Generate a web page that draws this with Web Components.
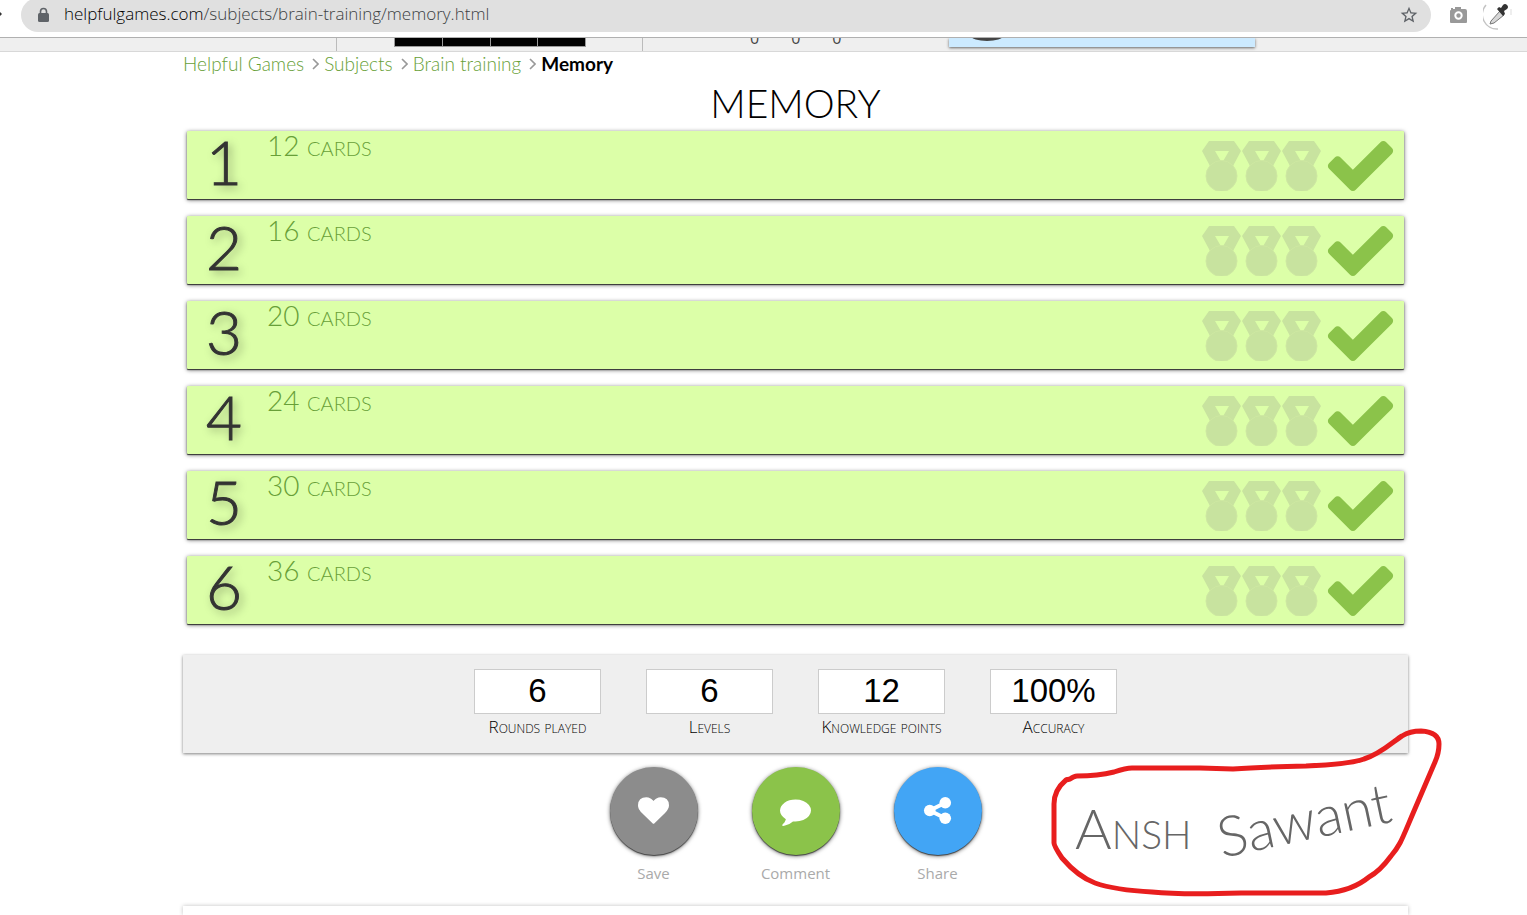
<!DOCTYPE html>
<html lang="en">
<head>
<meta charset="utf-8">
<title>Memory - Helpful Games</title>
<style>
html, body { margin: 0; height: 100%; }
body { background: #fff; color: #000; font-family: "Lato", "Open Sans", sans-serif; }
</style>
</head>
<body>
<memory-page></memory-page>

<script>
function define(name, html, setup) {
  const template = document.createElement('template');
  template.innerHTML = html;
  customElements.define(name, class extends HTMLElement {
    connectedCallback() {
      if (this.shadowRoot) return;
      this.attachShadow({ mode: 'open' }).append(template.content.cloneNode(true));
      if (setup) setup(this, this.shadowRoot);
    }
  });
}

define('browser-bar', `
<style>
:host { display: flex; align-items: flex-end; box-sizing: border-box; height: 37px; padding-bottom: 5px; overflow: hidden; background: #fff; }
.edge { width: 21px; height: 34px; flex: none; }
.address { flex: 1; display: flex; align-items: center; box-sizing: border-box; height: 34px; padding: 0 12px 0 16px; border-radius: 17px; background: #e0e0e0; font: 300 17px/24px "Open Sans", sans-serif; color: #3c4043; }
.url { flex: 1; margin-left: 14px; padding-bottom: 2px; white-space: nowrap; }
b { font-weight: 300; color: #000; }
button { display: block; flex: none; border: 0; padding: 0; background: none; }
svg { display: block; }
.tools { display: flex; align-items: center; height: 34px; flex: none; width: 96px; }
.camera { margin-left: 18px; }
.picker { margin-left: 16px; }
</style>
<svg class="edge" viewBox="0 0 21 34" aria-hidden="true"><path d="M0 14 2 16 0 18z" fill="#333"/></svg>
<div class="address">
  <svg width="13" height="16" viewBox="0 0 13 16" aria-hidden="true"><path d="M3.500 7V4.500a3 3 0 0 1 6 0V7" fill="none" stroke="#5f6368" stroke-width="1.600"/><rect x="1" y="6" width="11" height="9" rx="1.500" fill="#5f6368"/></svg>
  <span class="url"><b>helpfulgames.com</b>/subjects/brain-training/memory.html</span>
  <button aria-label="Bookmark"><svg width="20" height="20" viewBox="0 0 24 24"><path fill="#5f6368" d="M22 9.240l-7.190-.620L12 2 9.190 8.630 2 9.240l5.460 4.730L5.820 21 12 17.270 18.180 21l-1.630-7.030L22 9.240zM12 15.400l-3.760 2.270 1-4.280-3.320-2.880 4.380-.380L12 6.100l1.710 4.040 4.380.380-3.320 2.880 1 4.280L12 15.400z"/></svg></button>
</div>
<div class="tools">
  <button class="camera" aria-label="Screenshot"><svg width="18" height="18" viewBox="0 0 18 18"><path fill="#999" d="M2 2h2v1h2V1h6v2h4q2 0 2 2v11q0 1-1 1H2q-1 0-1-1V5q0-1 1-1z"/><circle cx="9.500" cy="9.500" r="3.200" fill="none" stroke="#fff" stroke-width="2"/></svg></button>
  <button class="picker" aria-label="Colour picker"><svg width="32" height="32" viewBox="0 0 32 32"><path d="M3 6A14.500 14.500 0 0 0 15 30" fill="none" stroke="#c4c4c4" stroke-width="1.500"/><path d="M28 10v6" fill="none" stroke="#ddd"/><path d="M8 22 17 12l4 4L11 24l-4 1z" fill="#d7d7d7" stroke="#777"/><path d="m14 10 2-2 2 1 2-3q2-2 4 0t0 4l-3 2 1 3-2 2z" fill="#333"/></svg></button>
</div>`);

define('game-strip', `
<style>
:host { display: flex; align-items: stretch; box-sizing: border-box; height: 15px; overflow: hidden; border-top: 1px solid #b0b0b0; border-bottom: 1px solid #d8d8d8; background: #efefef; }
.lead { flex: none; width: 336px; }
.board { flex: none; box-sizing: border-box; width: 307px; padding-left: 57px; border: solid #bbb; border-width: 0 1px; }
.cells { display: grid; grid-template-columns: repeat(4, 1fr); gap: 1px; box-sizing: border-box; width: 192px; height: 9px; border: solid #999; border-width: 0 1px 1px; background: #999; }
.cells i { background: #000; }
.score { display: flex; align-items: flex-end; flex: none; gap: 32px; box-sizing: border-box; width: 306px; height: 10px; padding-left: 107px; font: 16px/20px "Open Sans", sans-serif; color: #444; }
.card { flex: none; box-sizing: border-box; width: 306px; height: 9px; padding-left: 20px; background: #cceaff; box-shadow: 0 1px 3px #666; }
.card svg { display: block; }
</style>
<div class="lead"></div>
<div class="board"><div class="cells"><i></i><i></i><i></i><i></i></div></div>
<div class="score"><span>0</span><span>0</span><span>0</span></div>
<div class="card"><svg width="36" height="4" viewBox="0 0 36 4" aria-hidden="true"><ellipse cx="18" cy="-2" rx="16" ry="5" fill="#444"/></svg></div>`);

define('bread-crumbs', `
<style>
:host { display: block; }
ol { display: flex; margin: 0; padding: 0; list-style: none; font-size: 19px; line-height: 24px; white-space: nowrap; }
li { display: flex; align-items: center; }
a { color: #689f38; text-decoration: none; font-weight: 300; }
strong { font-weight: 700; }
svg { margin: 0 5px 0 8px; }
</style>
<nav aria-label="Breadcrumb"><ol></ol></nav>`, (host, root) => {
  const names = host.getAttribute('path').split('/');
  const chevron = '<svg width="7" height="12" viewBox="0 0 7 12" aria-hidden="true"><path d="m1 1 5 5-5 5" fill="none" stroke="#999" stroke-width="1.600"/></svg>';
  root.querySelector('ol').innerHTML = names.map((n, i) => i < names.length - 1
    ? `<li><a href="#">${n}</a>${chevron}</li>` : `<li><strong>${n}</strong></li>`).join('');
});

define('award-medal', `
<style>:host { display: block; width: 40px; height: 50px; } svg { display: block; }</style>
<svg width="40" height="50" viewBox="0 0 40 50" aria-hidden="true">
<path fill="#c8e39f" fill-rule="evenodd" d="M7 0H32L39 10 31 25H8L0 10zM13 10 20 22 27 10z"/>
<circle cx="19.500" cy="35" r="15.500" fill="#c8e39f" stroke="#cee8a2"/></svg>`);

define('level-row', `
<style>
:host { display: block; }
a { display: flex; height: 68px; box-sizing: border-box; background: #dcffa8; color: #689f38; text-decoration: none; box-shadow: 0 1px 1px #333, 0 1px 4px rgba(0,0,0,.6); border-radius: 1px; }
.number { flex: none; width: 74px; font-size: 62px; line-height: 60px; text-align: center; font-weight: 300; color: #333; text-shadow: 3px 3px 10px rgba(0,0,0,.4); -webkit-text-stroke: 1px #333; }
.name { flex: 1; margin-left: 6px; font-size: 28px; line-height: 28px; font-weight: 300; font-variant: small-caps; }
.awards { display: flex; padding: 10px 10px 0 0; }
.check { display: block; margin-left: 5px; }
</style>
<a href="#"><span class="number"></span><span class="name"><slot></slot></span>
<span class="awards"><award-medal></award-medal><award-medal></award-medal><award-medal></award-medal>
<svg class="check" width="67" height="50" viewBox="121 334 1550 1188" preserveAspectRatio="xMidYMid meet" role="img" aria-label="Completed"><path fill="#8bc34a" d="M1671 566q0 40-28 68l-724 724-136 136q-28 28-68 28t-68-28l-136-136-362-362q-28-28-28-68t28-68l136-136q28-28 68-28t68 28l294 295 656-657q28-28 68-28t68 28l136 136q28 28 28 68z"/></svg></span></a>`, (host, root) => {
  root.querySelector('.number').textContent = host.getAttribute('number');
});

define('stat-box', `
<style>
:host { display: block; width: 127px; }
dl { display: flex; flex-direction: column-reverse; margin: 0; text-align: center; }
dd { margin: 0; box-sizing: border-box; height: 45px; border: 1px solid #ccc; background: #fff; font: 33px/42px "Liberation Sans", Arial, sans-serif; }
dt { font: 300 17px/26px "Open Sans", sans-serif; font-variant: small-caps; white-space: nowrap; }
</style>
<dl><dt><slot></slot></dt><dd></dd></dl>`, (host, root) => {
  root.querySelector('dd').textContent = host.getAttribute('value');
});

define('stats-panel', `
<style>
:host { display: flex; justify-content: center; gap: 45px; box-sizing: border-box; height: 98px; padding-top: 14px; background: #efefef; box-shadow: 0 1px 3px rgba(0,0,0,.5); }
</style><slot></slot>`);

const ICONS = {
  heart: '<path d="M896 1664q-26 0-44-18l-624-602q-10-8-27.500-26t-55.500-65.500-68-97.500-53.500-121-23.500-138q0-220 127-344t351-124q62 0 126.500 21.500t120 58 95.500 68.500 76 68q36-36 76-68t95.500-68.500 120-58 126.500-21.500q224 0 351 124t127 344q0 221-229 450l-623 600q-18 18-44 18z"/>',
  comment: '<path d="M1792 896q0 174-120 321.500t-326 233-450 85.500q-70 0-145-8-198 175-460 242-49 14-114 22-17 2-30.500-9t-17.500-29v-1q-3-4-.5-12t2-10 4.500-9.500l6-9 7-8.500 8-9q7-8 31-34.500t34.500-38 31-39.500 32.500-51 27-59 26-76q-157-89-247.500-220t-90.500-281q0-130 71-248.500t191-204.500 286-136.500 348-50.500q244 0 450 85.500t326 233 120 321.500z"/>',
  share: '<circle cx="448" cy="896" r="336"/><circle cx="1344" cy="448" r="336"/><circle cx="1344" cy="1344" r="336"/><path d="M1344 448 448 896l896 448" fill="none" stroke="#fff" stroke-width="230"/>'
};

define('round-action', `
<style>
:host { display: block; width: 88px; }
button { display: flex; flex-direction: column; align-items: center; gap: 7px; width: 88px; padding: 0; border: 0; background: none; font: 15px/22px "Open Sans", "Noto Sans", sans-serif; color: #aaa; }
.disc { display: flex; align-items: center; justify-content: center; box-sizing: border-box; width: 88px; height: 88px; padding-bottom: 2px; border-radius: 50%; background: var(--disc); box-shadow: 0 1px 1px #444, 0 1px 4px rgba(0,0,0,.6); }
</style>
<button><span class="disc"></span><slot></slot></button>`, (host, root) => {
  root.querySelector('.disc').innerHTML = `<svg width="31" height="31" viewBox="0 0 1792 1792" fill="#fff" aria-hidden="true">${ICONS[host.getAttribute('icon')]}</svg>`;
});

define('signed-note', `
<style>
:host { display: block; width: 394px; height: 170px; pointer-events: none; }
svg { display: block; overflow: visible; }
text { font: 300 56px "Lato", sans-serif; fill: #666; }
.first { font-variant: small-caps; }
</style>
<svg width="394" height="170" viewBox="0 0 394 170">
<path d="M18 52L22 51Q26 48 29 48Q50 48 66 44Q78 40 84 40L152 40 185 41Q212 39 258 38Q302 36 316 31C333 26 347 12 354 8Q362 3 373 3Q391 4 391 16Q391 25 387 34L366 83C354 111 353 116 343 128Q332 143 321 149Q304 163 278 165L193 165Q133 167 104 164Q67 162 47 155C31 149 20 137 14 130Q6 118 6 115L6 76Q6 62 18 52" fill="none" stroke="#e81e1e" stroke-width="5" stroke-linecap="round" stroke-linejoin="round"/>
<text class="first" x="27" y="121">Ansh</text>
<text x="174" y="130" transform="rotate(-12 174 130)">Sawant</text>
</svg>`);

define('memory-page', `
<style>
:host { display: flex; flex-direction: column; min-height: 100vh; }
main { flex: 1; display: flex; flex-direction: column; padding: 0 119px 0 183px; }
h1 { margin: 0; height: 55px; font-size: 39px; line-height: 54px; font-weight: 300; text-align: center; text-transform: uppercase; }
.levels { display: grid; gap: 17px; padding: 0 4px; }
stats-panel { margin-top: 31px; }
.actions { position: relative; display: flex; justify-content: center; gap: 54px; padding-top: 14px; }
signed-note { position: absolute; right: -34px; top: -25px; }
.next { flex: 1; margin-top: 22px; box-shadow: 0 0 4px rgba(0,0,0,.25); clip-path: inset(-4px -4px 0); background: #fff; }
</style>
<browser-bar></browser-bar>
<game-strip></game-strip>
<main>
  <bread-crumbs path="Helpful Games/Subjects/Brain training/Memory"></bread-crumbs>
  <h1>Memory</h1>
  <section class="levels" aria-label="Levels">
    <level-row number="1">12 cards</level-row>
    <level-row number="2">16 cards</level-row>
    <level-row number="3">20 cards</level-row>
    <level-row number="4">24 cards</level-row>
    <level-row number="5">30 cards</level-row>
    <level-row number="6">36 cards</level-row>
  </section>
  <stats-panel>
    <stat-box value="6">Rounds played</stat-box>
    <stat-box value="6">Levels</stat-box>
    <stat-box value="12">Knowledge points</stat-box>
    <stat-box value="100%">Accuracy</stat-box>
  </stats-panel>
  <section class="actions" aria-label="Actions">
    <round-action icon="heart" style="--disc:#8c8c8c">Save</round-action>
    <round-action icon="comment" style="--disc:#8bc34a">Comment</round-action>
    <round-action icon="share" style="--disc:#42a5f5">Share</round-action>
    <signed-note></signed-note>
  </section>
  <section class="next" aria-label="More"></section>
</main>`);
</script>
</body>
</html>
